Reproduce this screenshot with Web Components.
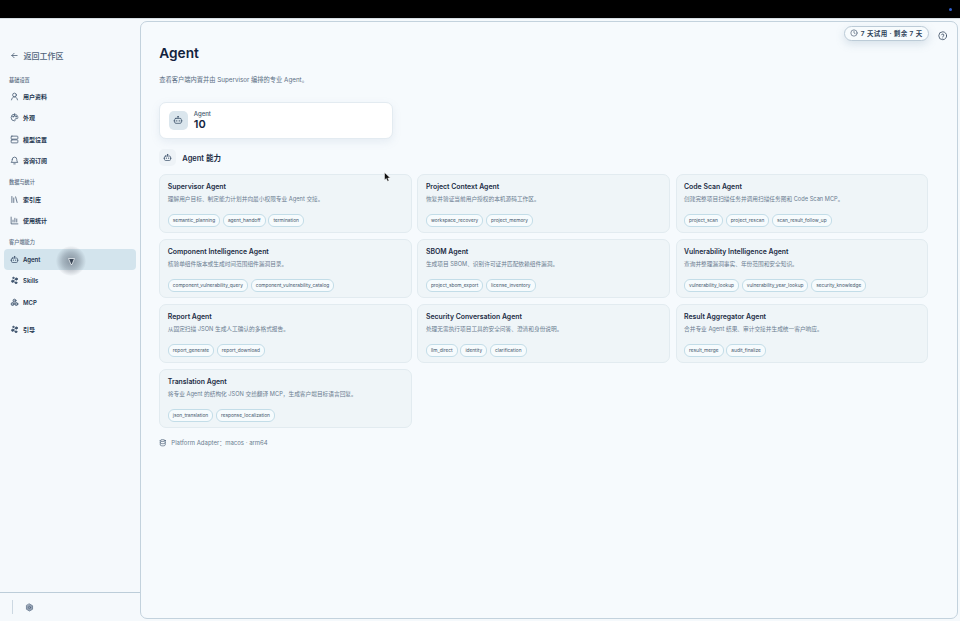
<!DOCTYPE html>
<html lang="zh-CN"><head><meta charset="utf-8"><title>Agent</title>
<style>
html,body{margin:0;height:100%;overflow:hidden}
body{font-family:Inter,"Noto Sans CJK SC",sans-serif;background:#f5f9fc;color:#12233d}
</style></head><body>
<app-shell></app-shell>
<script>
const I={
back:'<path d="M19 12H5M11 6l-6 6 6 6"/>',
user:'<circle cx="12" cy="8" r="5"/><path d="M4 21c1-5 4-8 8-8s7 3 8 8"/>',
palette:'<path d="M12 3a9 9 0 1 0 0 18c2 0 2-1.500 1.500-3s.5-3 2.500-3h3c1.500 0 2-1 2-3 0-5-4-9-9-9z"/><circle cx="8" cy="10" r="1"/><circle cx="12" cy="7.500" r="1"/><circle cx="16" cy="10" r="1"/>',
server:'<rect x="3" y="3" width="18" height="8" rx="2"/><rect x="3" y="13" width="18" height="8" rx="2"/>',
bell:'<path d="M6 9a6 6 0 0 1 12 0c0 6 3 8 3 8H3s3-2 3-8"/><path d="M10 21h4"/>',
lib:'<path d="M5 4v16M10 8v12M15 5l4 15"/>',
chart:'<path d="M3 3v18h18"/><path d="M8 16v-5M13 16V6M18 16v-8"/>',
bot:'<path d="M12 8V4.500"/><circle cx="12" cy="4" r=".6"/><rect x="4" y="8" width="16" height="12" rx="3"/><path d="M2 14h2M20 14h2M9 13v2M15 13v2"/>',
skills:'<circle cx="7" cy="14" r="3" fill="currentColor"/><circle cx="17" cy="8" r="3" fill="currentColor"/><circle cx="16" cy="18" r="2.500" fill="currentColor"/><circle cx="9" cy="5" r="2" fill="currentColor"/><path d="M7 14l10-6M7 14l9 4"/>',
mcp:'<circle cx="12" cy="7" r="4" fill="currentColor" fill-opacity=".45"/><circle cx="7" cy="16" r="4" fill="currentColor" fill-opacity=".45"/><circle cx="17" cy="16" r="4" fill="currentColor" fill-opacity=".45"/>',
gear:'<path d="M12 2.500l8.200 4.750v9.500L12 21.500l-8.200-4.750v-9.500z" fill="currentColor" fill-opacity=".55"/><circle cx="12" cy="12" r="3"/>',
clock:'<circle cx="12" cy="12" r="9.500"/><path d="M12 6.500V12l3.500 2"/>',
help:'<circle cx="12" cy="12" r="10"/><path d="M9 9.500a3 3 0 0 1 5.800 1c0 2-2.800 2.500-2.800 4"/><path d="M12 18h.01"/>',
db:'<ellipse cx="12" cy="5" rx="8" ry="3"/><path d="M4 5v14c0 1.700 3.600 3 8 3s8-1.300 8-3V5M4 12c0 1.700 3.600 3 8 3s8-1.300 8-3"/>'
};
const svg=(n,s,c='currentColor',w=2)=>`<svg width="${s}" height="${s}" viewBox="0 0 24 24" fill="none" stroke="${c}" stroke-width="${w}" stroke-linecap="round" stroke-linejoin="round" style="display:block;flex:none;color:${c}">${I[n]}</svg>`;
const def=(name,render)=>customElements.define(name,class extends HTMLElement{
 connectedCallback(){if(!this.shadowRoot){this.attachShadow({mode:'open'}).innerHTML=render(this)}}
});
def('nav-item',e=>`<style>
:host{display:flex;align-items:center;height:21.300px;margin:0 4px;padding-left:5.500px;gap:4.500px;border-radius:4px;font-size:6px;font-weight:600;color:#24364f;box-sizing:border-box}
:host([active]){background:#d3e4ed;color:#1d3048}
:host([spaced]){margin-top:6px}
span{display:flex;width:9px;justify-content:center}
</style><span>${svg(e.getAttribute('icon'),9,'#3f546d',2)}</span><slot></slot>`);
def('nav-group',e=>`<style>
:host{display:block;margin-top:var(--gap,7px)}
h4{margin:0 0 1.500px 9px;font-size:5.200px;line-height:9px;font-weight:500;color:#5c6f85}
</style><h4>${e.getAttribute('label')}</h4><slot></slot>`);
def('side-bar',()=>`<style>
:host{display:flex;flex-direction:column;width:140px;flex:none;height:100%;box-sizing:border-box;padding-top:30px}
.back{display:flex;align-items:center;gap:4.500px;padding-left:10px;height:13px;font-size:8px;color:#50637a;font-weight:500}
.grow{flex:1}
.foot{height:28px;border-top:1px solid #bccdd9;display:flex;align-items:center}
.tick{width:1px;height:14px;background:#ccd8e2;margin-left:12px}
.g{margin-left:12px}
</style>
<div class="back">${svg('back',9,'#41556d',2)}<span>返回工作区</span></div>
<nav-group label="基础设置" style="--gap:13.500px"><nav-item icon="user">用户资料</nav-item><nav-item icon="palette">外观</nav-item><nav-item icon="server">模型设置</nav-item><nav-item icon="bell">咨询订阅</nav-item></nav-group>
<nav-group label="数据与统计"><nav-item icon="lib">索引库</nav-item><nav-item icon="chart">使用统计</nav-item></nav-group>
<nav-group label="客户端能力"><nav-item icon="bot" active>Agent</nav-item><nav-item icon="skills">Skills</nav-item><nav-item icon="mcp">MCP</nav-item><nav-item icon="skills" spaced>引导</nav-item></nav-group>
<div class="grow"></div>
<div class="foot"><i class="tick"></i><span class="g">${svg('gear',9,'#4a5f7a',1.600)}</span></div>`);
def('tag-chip',()=>`<style>
:host{display:inline-flex;align-items:center;height:11.500px;padding:0 4px;border:.7px solid #c3dde8;border-radius:6px;background:#f6fbfd;font-size:4.800px;color:#44566c;white-space:nowrap}
</style><slot></slot>`);
def('agent-card',e=>`<style>
:host{display:flex;flex-direction:column;box-sizing:border-box;height:59.500px;padding:7.500px 8px 0 7.500px;border:.7px solid #e2ebf0;border-radius:7px;background:#eff5f8}
h3{margin:0;font-size:6.900px;line-height:9px;font-weight:600;color:#1b2c45}
p{margin:3.500px 0 0;font-size:5.700px;line-height:8px;color:#6a7c90}
div{display:flex;gap:2.800px;margin-top:11px}
</style><h3>${e.getAttribute('name')}</h3><p>${e.getAttribute('desc')}</p><div><slot></slot></div>`);
def('stat-card',()=>`<style>
:host{display:flex;align-items:center;gap:6px;box-sizing:border-box;width:233.500px;height:37.500px;padding-left:8.500px;background:#fff;border:.7px solid #e3ebf1;border-radius:7px;box-shadow:0 3px 8px rgba(120,150,175,.13)}
.i{width:19px;height:19px;border-radius:5px;background:#dbe6ed;display:flex;align-items:center;justify-content:center}
.l{font-size:6px;line-height:8px;color:#44566c;font-weight:500}
.n{font-size:11px;line-height:12px;font-weight:600;color:#12233d}
</style><span class="i">${svg('bot',10,'#3b5169',1.800)}</span><span><div class="l">Agent</div><div class="n">10</div></span>`);
def('main-panel',()=>{
 const A=[
 ['Supervisor Agent','理解用户目标、制定能力计划并向最小权限专业 Agent 交接。',['semantic_planning','agent_handoff','termination']],
 ['Project Context Agent','恢复并验证当前用户授权的本机源码工作区。',['workspace_recovery','project_memory']],
 ['Code Scan Agent','创建完整项目扫描任务并调用扫描任务图和 Code Scan MCP。',['project_scan','project_rescan','scan_result_follow_up']],
 ['Component Intelligence Agent','核验单组件版本或生成时间范围组件漏洞目录。',['component_vulnerability_query','component_vulnerability_catalog']],
 ['SBOM Agent','生成项目 SBOM、识别许可证并匹配依赖组件漏洞。',['project_sbom_export','license_inventory']],
 ['Vulnerability Intelligence Agent','查询并整理漏洞事实、年份范围和安全知识。',['vulnerability_lookup','vulnerability_year_lookup','security_knowledge']],
 ['Report Agent','从固定扫描 JSON 生成人工确认的多格式报告。',['report_generate','report_download']],
 ['Security Conversation Agent','处理无需执行项目工具的安全问答、澄清和身份说明。',['llm_direct','identity','clarification']],
 ['Result Aggregator Agent','合并专业 Agent 结果、审计交接并生成统一客户响应。',['result_merge','audit_finalize']],
 ['Translation Agent','将专业 Agent 的结构化 JSON 交给翻译 MCP，生成客户端目标语言回复。',['json_translation','response_localization']]
 ];
 return `<style>
:host{display:block;flex:1;min-width:0;position:relative;box-sizing:border-box;height:598px;margin:2px 2.500px 0 0;padding:18.500px 28.500px 0 18.300px;background:#f6fafd;border:1px solid #c3d2dd;border-radius:7px}
h1{margin:0;font-size:13.700px;line-height:24px;font-weight:600;color:#12233d}
.sub{margin:11px 0 17px;font-size:6.250px;line-height:9px;color:#5b6e84}
.sec{display:flex;align-items:center;gap:6px;margin:11.500px 0 9px;height:14px;font-size:7.500px;font-weight:600;color:#1b2c45}
.si{width:17px;height:17px;border-radius:5px;background:#eef3f7;display:flex;align-items:center;justify-content:center}
.grid{display:grid;grid-template-columns:repeat(3,1fr);column-gap:5.700px;row-gap:5.500px}
.foot{display:flex;align-items:center;gap:4.500px;margin-top:10px;font-size:6px;line-height:10px;color:#6b7d90}
.trial{position:absolute;top:3.500px;right:28px;display:flex;align-items:center;gap:3px;height:15px;padding:0 5px;box-sizing:border-box;background:#f7fbfd;border:.8px solid #bccbd7;border-radius:8px;font-size:6.500px;font-weight:600;letter-spacing:.35px;color:#2c3f57;box-shadow:0 3px 8px rgba(120,150,175,.25)}
.help{position:absolute;top:9px;right:9.500px}
</style>
<div class="trial">${svg('clock',8,'#3b4e66',1.800)}<span>7 天试用 · 剩余 7 天</span></div>
<div class="help">${svg('help',9.500,'#2f4258',1.900)}</div>
<h1>Agent</h1>
<div class="sub">查看客户端内置并由 Supervisor 编排的专业 Agent。</div>
<stat-card></stat-card>
<div class="sec"><span class="si">${svg('bot',9,'#3b5169',1.900)}</span><span>Agent 能力</span></div>
<div class="grid">${A.map(a=>`<agent-card name="${a[0]}" desc="${a[1]}">${a[2].map(t=>`<tag-chip>${t}</tag-chip>`).join('')}</agent-card>`).join('')}</div>
<div class="foot">${svg('db',7.500,'#4a5f78',2.200)}<span>Platform Adapter：macos · arm64</span></div>`;
});
def('mouse-pointer',e=>{
 const halo=e.hasAttribute('halo');
 return `<style>:host{position:absolute;display:block;width:0;height:0}
.h{position:absolute;left:-15px;top:-15px;width:30px;height:30px;border-radius:50%;background:radial-gradient(circle,rgba(70,80,95,.55) 0,rgba(70,80,95,.3) 40%,rgba(70,80,95,0) 72%)}
svg{position:absolute;overflow:visible}</style>
${halo?`<div class="h"></div><svg style="left:-3.500px;top:-3px" width="7" height="7" viewBox="0 0 7 7"><path d="M.5 .5H6.500L4 6.500H3z" fill="#3a4656" stroke="#eef3f6" stroke-width=".8" stroke-linejoin="round"/></svg>`
:`<svg style="left:0;top:0" width="7" height="10" viewBox="0 0 7 10"><path d="M.5 .5V8L2.300 6.500 3.500 9.300 5 8.700 3.800 6H6.300z" fill="#111" stroke="#fff" stroke-width=".5"/></svg>`}`;
});
def('app-shell',()=>`<style>
:host{display:block;position:relative;width:960px;height:621px;overflow:hidden}
.top{height:18px;background:#000;position:relative}
.top i{position:absolute;right:8px;top:8px;width:3px;height:3px;border-radius:50%;background:#2f5fd0}
.body{display:flex;height:603px;border-top:.7px solid #d5dde3;box-sizing:border-box}
</style>
<div class="top"><i></i></div>
<div class="body"><side-bar></side-bar><main-panel></main-panel></div>
<mouse-pointer halo style="left:71px;top:260.500px"></mouse-pointer>
<mouse-pointer style="left:383.500px;top:171.500px"></mouse-pointer>`);
</script>
</body></html>
